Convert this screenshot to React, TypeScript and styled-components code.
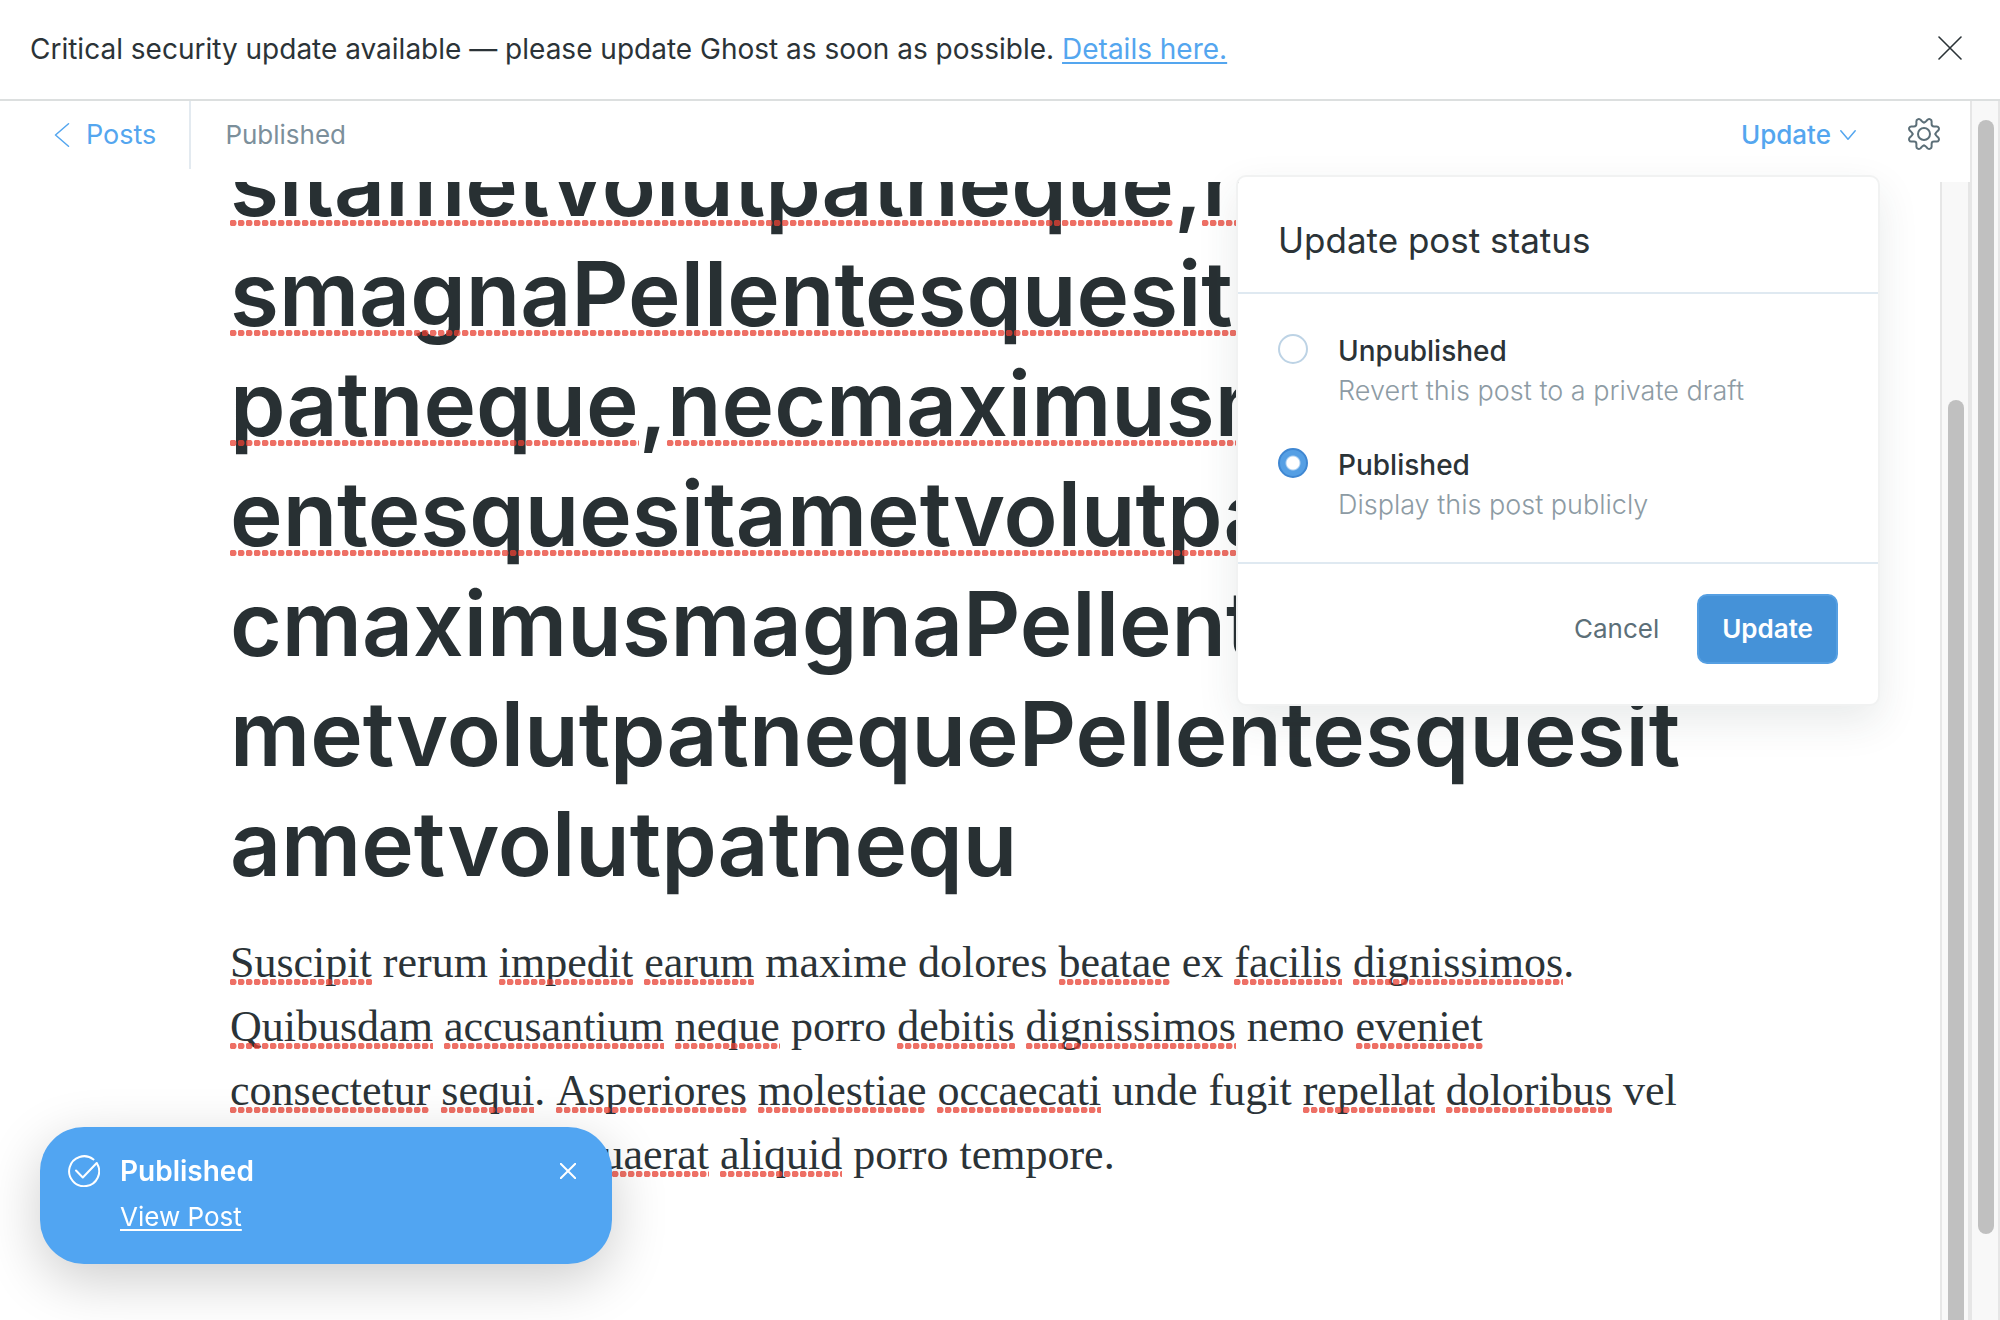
import React from 'react';
import styled, { createGlobalStyle, css } from 'styled-components';

const sans = "Inter, 'Open Sans', 'Liberation Sans', sans-serif";
const serif = "Georgia, 'Liberation Serif', serif";

const color = {
  ink: '#2b3337',
  title: '#283033',
  blue: '#54a6ef',
  blueDark: '#4592d8',
  slate: '#5c6f78',
  mid: '#7c8f9b',
  line: '#dfe9f1',
  track: '#f8f8f8',
  trackEdge: '#e6e6e6',
  thumb: '#c0c0c0',
};

const GlobalStyle = createGlobalStyle`
  *, *::before, *::after { box-sizing: border-box; }
  body { margin: 0; background: #fff; color: ${color.ink}; font-family: ${sans}; }
  h1, h2, p { margin: 0; }
  button { padding: 0; border: 0; background: none; color: inherit; font: inherit; cursor: pointer; }
  svg { display: block; fill: none; stroke: currentColor; stroke-linecap: round; stroke-linejoin: round; }
`;

const Page = styled.div`
  display: flex;
  flex-direction: column;
  height: 100vh;
  overflow: hidden;
`;

const Banner = styled.div`
  display: flex;
  flex: none;
  align-items: flex-start;
  justify-content: space-between;
  padding: 32px 38px 32px 30px;
  border-bottom: 2px solid #dcdfdf;
  font-size: 28px;
  line-height: 35px;
`;

const DismissButton = styled.button`
  margin-top: 4px;
`;

const BannerLink = styled.a`
  color: ${color.blue};
  text-decoration: underline;
  text-decoration-thickness: 2px;
  text-underline-offset: 3px;
`;

const Viewport = styled.div`
  display: flex;
  flex: 1;
  min-height: 0;
`;

const Editor = styled.main`
  display: flex;
  flex: 1;
  flex-direction: column;
  min-width: 0;
`;

const Toolbar = styled.header`
  position: relative;
  display: flex;
  flex: none;
  align-items: flex-start;
  height: 81px;
  font-size: 26px;
  line-height: 68px;
`;

const BackLink = styled.a`
  display: flex;
  align-items: center;
  gap: 16px;
  padding: 0 33px 0 54px;
  border-right: 2px solid #e3eaf0;
  color: ${color.blue};
  font-size: 27px;
  text-decoration: none;
`;

const Status = styled.div`
  flex: 1;
  padding-left: 34px;
  color: ${color.mid};
`;

const UpdateTrigger = styled.button`
  display: flex;
  align-items: center;
  gap: 9px;
  color: ${color.blue};
  font-weight: 500;
`;

const SettingsButton = styled.button`
  display: flex;
  align-items: center;
  height: 66px;
  margin: 0 30px 0 52px;
  color: ${color.slate};
`;

const Menu = styled.form`
  position: absolute;
  z-index: 2;
  top: 74px;
  right: 90px;
  width: 644px;
  border: 2px solid #f1f2f2;
  border-radius: 10px;
  background: #fff;
  background-clip: padding-box;
  box-shadow: 0 16px 40px rgba(40, 60, 60, 0.1);
  line-height: 40px;
`;

const MenuTitle = styled.h2`
  padding: 43px 40px 32px;
  border-bottom: 2px solid ${color.line};
  font-size: 35px;
  font-weight: 400;
  line-height: 40px;
`;

const Options = styled.div`
  display: grid;
  gap: 34px;
  padding: 37px 40px;
  border-bottom: 2px solid ${color.line};
`;

const Option = styled.label`
  display: grid;
  grid-template-columns: 30px 1fr;
  column-gap: 30px;
`;

const Radio = styled.input`
  appearance: none;
  width: 30px;
  height: 30px;
  margin: 3px 0 0;
  border: 2px solid #bdd3e5;
  border-radius: 50%;
  background: #fff;

  &:checked {
    border-color: #3f87d2;
    background: radial-gradient(circle, #fff 6px, #559fe4 8px);
  }
`;

const OptionName = styled.span`
  display: block;
  font-size: 28px;
  font-weight: 500;
`;

const OptionHint = styled.span`
  display: block;
  color: #8d9ba4;
  font-size: 27px;
  font-weight: 300;
`;

const Actions = styled.div`
  display: flex;
  align-items: center;
  justify-content: flex-end;
  gap: 38px;
  padding: 30px 40px 40px;
  font-size: 26px;
`;

const CancelButton = styled.button`
  color: ${color.slate};
`;

const SaveButton = styled.button`
  height: 70px;
  padding: 0 23px;
  border: 2px solid #559fe2;
  border-radius: 10px;
  background: ${color.blueDark};
  color: #fff;
  font-weight: 600;
`;

const Scroller = styled.div`
  display: flex;
  flex: 1;
  min-height: 0;
`;

const Canvas = styled.article`
  flex: 1;
  min-width: 0;
  overflow: hidden;
  padding: 0 230px;
  white-space: nowrap;
`;

const PostTitle = styled.h1`
  margin-top: -53px;
  color: ${color.title};
  font-size: 89px;
  font-weight: 600;
  line-height: 110px;
`;

const PostBody = styled.p`
  margin-top: 32px;
  font-family: ${serif};
  font-size: 44px;
  line-height: 64px;
`;

const Misspelled = styled.span<{ $gap: number }>`
  position: relative;
  display: inline-block;

  &::after {
    position: absolute;
    right: 0;
    bottom: ${(p) => p.$gap}px;
    left: 0;
    height: 6px;
    background: radial-gradient(circle at 3px 3px, rgba(232, 64, 50, 0.75) 3px, transparent 4px) 0 0 / 8px 6px repeat-x;
    content: '';
  }
`;

const Track = styled.div<{ $top: number; $bottom: number }>`
  display: flex;
  flex: none;
  width: 30px;
  padding: ${(p) => p.$top}px 4px ${(p) => p.$bottom}px 6px;
  border: solid ${color.trackEdge};
  border-width: 0 2px;
  background: ${color.track};
`;

const Thumb = styled.div<{ $open?: boolean }>`
  width: 16px;
  background: ${color.thumb};
  border-radius: 8px;
  ${(p) =>
    p.$open &&
    css`
      border-radius: 8px 8px 0 0;
    `}
`;

const Toast = styled.aside`
  position: fixed;
  z-index: 3;
  bottom: 56px;
  left: 40px;
  display: grid;
  grid-template-columns: 32px 1fr auto;
  column-gap: 20px;
  align-items: center;
  width: 572px;
  padding: 24px 36px 27px 28px;
  border-radius: 44px;
  background: #51a5f2;
  box-shadow: 0 16px 56px rgba(0, 0, 0, 0.2);
  color: #fff;
`;

const ToastTitle = styled.strong`
  font-size: 28px;
  font-weight: 600;
  line-height: 40px;
`;

const ToastLink = styled.a`
  grid-column: 2;
  justify-self: start;
  margin-top: 6px;
  color: inherit;
  font-size: 26px;
  line-height: 40px;
  text-decoration: underline;
  text-decoration-thickness: 2px;
  text-underline-offset: 3px;
`;

type Piece = string | { typo: string };
const t = (typo: string): Piece => ({ typo });

const titleLines: Piece[][] = [
  [t('sitametvolutpatneque'), ',', t('necmaximu')],
  [t('smagnaPellentesquesitametvolut')],
  [t('patneque'), ',', t('necmaximusmagnaPell')],
  [t('entesquesitametvolutpatneque'), ',ne'],
  ['cmaximusmagnaPellentesquesita'],
  ['metvolutpatnequePellentesquesit'],
  ['ametvolutpatnequ'],
];

const bodyLines: Piece[][] = [
  [t('Suscipit'), ' rerum ', t('impedit'), ' ', t('earum'), ' maxime dolores ', t('beatae'), ' ex ', t('facilis'), ' ', t('dignissimos'), '.'],
  [t('Quibusdam'), ' ', t('accusantium'), ' ', t('neque'), ' porro ', t('debitis'), ' ', t('dignissimos'), ' nemo ', t('eveniet')],
  [t('consectetur'), ' ', t('sequi'), '. ', t('Asperiores'), ' ', t('molestiae'), ' ', t('occaecati'), ' unde fugit ', t('repellat'), ' ', t('doloribus'), ' vel'],
  [t('voluptatibus'), ' labore ', t('quaerat'), ' ', t('aliquid'), ' porro tempore.'],
];

function Lines({ lines, gap }: { lines: Piece[][]; gap: number }) {
  return (
    <>
      {lines.map((line, i) => (
        <React.Fragment key={i}>
          {i > 0 && <br />}
          {line.map((piece, j) =>
            typeof piece === 'string' ? (
              piece
            ) : (
              <Misspelled key={j} $gap={gap}>
                {piece.typo}
              </Misspelled>
            ),
          )}
        </React.Fragment>
      ))}
    </>
  );
}

function Cross({ size, weight }: { size: number; weight: number }) {
  return (
    <svg width={size} height={size} viewBox="0 0 24 24" strokeWidth={weight} aria-hidden="true">
      <path d="M1 1l22 22M23 1L1 23" />
    </svg>
  );
}

const gearQuarter =
  'M16 4.6C17.6 4.6 18.4 2.6 19.8 1.5C21.4 .5 23.6 1.4 23.6 3.2V6Q23.6 8.4 26 8.4H28.8C30.6 8.4 31.5 10.6 30.5 12.2C29.4 13.6 27.4 14.4 27.4 16';

function Gear() {
  return (
    <svg width="32" height="32" viewBox="0 0 32 32" strokeWidth="2" aria-hidden="true">
      <circle cx="16" cy="16" r="6" />
      {[0, 90, 180, 270].map((angle) => (
        <path key={angle} d={gearQuarter} transform={`rotate(${angle} 16 16)`} />
      ))}
    </svg>
  );
}

export default function App() {
  return (
    <Page>
      <GlobalStyle />
      <Banner role="alert">
        <span>
          Critical security update available — please update Ghost as soon as possible.{' '}
          <BannerLink href="#details">Details here.</BannerLink>
        </span>
        <DismissButton type="button" aria-label="Dismiss alert">
          <Cross size={24} weight={1.6} />
        </DismissButton>
      </Banner>
      <Viewport>
        <Editor>
          <Toolbar>
            <BackLink href="#posts">
              <svg width="16" height="24" viewBox="0 0 16 24" strokeWidth="1.5" aria-hidden="true">
                <path d="M14.5 .8 1.5 12l13 11.2" />
              </svg>
              Posts
            </BackLink>
            <Status>Published</Status>
            <UpdateTrigger type="button" aria-expanded="true">
              Update
              <svg width="16" height="10" viewBox="0 0 16 10" strokeWidth="1.5" aria-hidden="true">
                <path d="M.8 .8 8 9.2 15.2 .8" />
              </svg>
            </UpdateTrigger>
            <SettingsButton type="button" aria-label="Settings">
              <Gear />
            </SettingsButton>
            <Menu>
              <MenuTitle>Update post status</MenuTitle>
              <Options>
                <Option>
                  <Radio type="radio" name="status" value="draft" />
                  <span>
                    <OptionName>Unpublished</OptionName>
                    <OptionHint>Revert this post to a private draft</OptionHint>
                  </span>
                </Option>
                <Option>
                  <Radio type="radio" name="status" value="published" defaultChecked />
                  <span>
                    <OptionName>Published</OptionName>
                    <OptionHint>Display this post publicly</OptionHint>
                  </span>
                </Option>
              </Options>
              <Actions>
                <CancelButton type="button">Cancel</CancelButton>
                <SaveButton type="button">Update</SaveButton>
              </Actions>
            </Menu>
          </Toolbar>
          <Scroller>
            <Canvas>
              <PostTitle>
                <Lines lines={titleLines} gap={13} />
              </PostTitle>
              <PostBody>
                <Lines lines={bodyLines} gap={10} />
              </PostBody>
            </Canvas>
            <Track $top={218} $bottom={0}>
              <Thumb $open />
            </Track>
          </Scroller>
        </Editor>
        <Track $top={19} $bottom={86}>
          <Thumb />
        </Track>
      </Viewport>
      <Toast role="status">
        <svg width="32" height="32" viewBox="0 0 32 32" strokeWidth="2" aria-hidden="true">
          <path d="M25.5 4.5A15 15 0 1 0 29 8.5" />
          <path d="M8 15.5l6.8 7L28.7 8" />
        </svg>
        <ToastTitle>Published</ToastTitle>
        <button type="button" aria-label="Close notification">
          <Cross size={16} weight={3} />
        </button>
        <ToastLink href="#view">View Post</ToastLink>
      </Toast>
    </Page>
  );
}
